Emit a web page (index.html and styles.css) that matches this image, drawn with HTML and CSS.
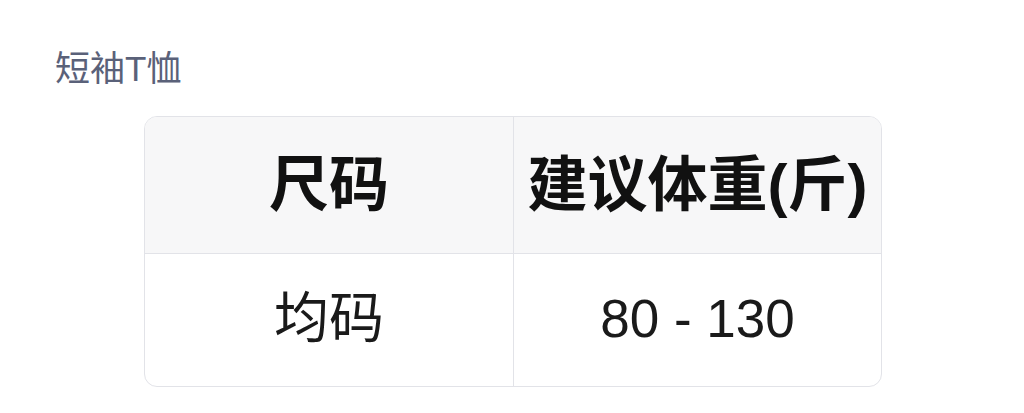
FILE: index.html
```html
<!DOCTYPE html>
<html lang="zh-CN">
<head>
<meta charset="utf-8">
<link rel="stylesheet" href="styles.css">
</head>
<body>
<div class="page">
  <div class="title">短袖T恤</div>
  <table class="size-table">
    <thead>
      <tr><th>尺码</th><th>建议体重(斤)</th></tr>
    </thead>
    <tbody>
      <tr><td>均码</td><td><span class="num">80 - 130</span></td></tr>
    </tbody>
  </table>
</div>
</body>
</html>
```
FILE: styles.css
```css
html, body {
  margin: 0;
  padding: 0;
  background: #ffffff;
}
.page {
  padding: 49px 0 0 55px;
  font-family: "Liberation Sans", "Noto Sans CJK SC", sans-serif;
}
.title {
  font-size: 35px;
  line-height: 40px;
  color: #5a6179;
  height: 40px;
}
.size-table {
  margin: 27px 0 0 89px;
  width: 738px;
  border-collapse: separate;
  border-spacing: 0;
  border: 1px solid #e2e3e8;
  border-radius: 13px;
  overflow: hidden;
  table-layout: fixed;
}
.size-table th,
.size-table td {
  width: 50%;
  text-align: center;
  padding: 0;
  color: #111111;
  box-sizing: border-box;
}
.size-table th {
  height: 137px;
  background: #f7f7f8;
  font-size: 60px;
  line-height: 60px;
  font-weight: bold;
  border-bottom: 1px solid #e2e3e8;
  padding-top: 2px;
}
.size-table td {
  height: 132px;
  font-size: 55px;
  line-height: 60px;
  font-weight: normal;
  color: #1a1a1a;
  padding-bottom: 4px;
}
.size-table .num {
  font-size: 53px;
}
.size-table th + th,
.size-table td + td {
  border-left: 1px solid #e2e3e8;
}
```
